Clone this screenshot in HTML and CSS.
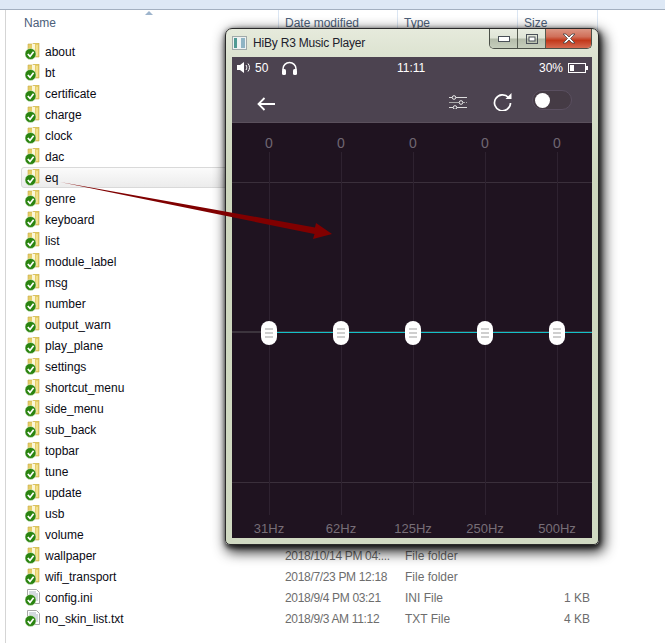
FILE: index.html
```html
<!DOCTYPE html>
<html>

<head>
    <meta charset="UTF-8">
    <title>HiBy R3 Music Player</title>
    <link rel="stylesheet" href="styles.css">
</head>

<body>

    <svg class="defs" width="0" height="0">
        <symbol id="folder" viewBox="0 0 15 17">
            <path d="M3 1h5l1-1h5v14H3z" fill="#e6cd68" stroke="#c8ab48" stroke-width=".6"/>
            <path d="M7 1h3v12H7z" fill="#fbf6d8"/>
            <path d="M11 2h2v11h-2z" fill="#f2e08c"/>
            <circle cx="5.500" cy="11" r="5.500" fill="#2a8410" stroke="#e8f4e0" stroke-width=".5"/>
            <path d="M2.800 11l2.200 2.400 3.600-4.600" fill="none" stroke="#fff" stroke-width="1.700"/>
        </symbol>
        <symbol id="file" viewBox="0 0 15 17">
            <path d="M2.500 .5h9l3 3v11h-12z" fill="#fff" stroke="#a8a8a8"/>
            <path d="M4 3h7M4 5h9M4 7h9M8 9h5M9 11h4" stroke="#a9b4c0"/>
            <circle cx="5.500" cy="11" r="5.500" fill="#2a8410" stroke="#e8f4e0" stroke-width=".5"/>
            <path d="M2.800 11l2.200 2.400 3.600-4.600" fill="none" stroke="#fff" stroke-width="1.700"/>
        </symbol>
    </svg>

    <div class="explorer">
        <div class="toolbar"></div>
        <div class="head">
            <div class="hcell hname">Name</div>
            <div class="hcell hdate">Date modified</div>
            <div class="hcell htype">Type</div>
            <div class="hcell hsize">Size</div>
        </div>

        <div class="list">
            <div class="row"><span class="name"><svg class="ico"><use href="#folder"/></svg>about</span></div>
            <div class="row"><span class="name"><svg class="ico"><use href="#folder"/></svg>bt</span></div>
            <div class="row"><span class="name"><svg class="ico"><use href="#folder"/></svg>certificate</span></div>
            <div class="row"><span class="name"><svg class="ico"><use href="#folder"/></svg>charge</span></div>
            <div class="row"><span class="name"><svg class="ico"><use href="#folder"/></svg>clock</span></div>
            <div class="row"><span class="name"><svg class="ico"><use href="#folder"/></svg>dac</span></div>
            <div class="row hover"><span class="name"><svg class="ico"><use href="#folder"/></svg>eq</span></div>
            <div class="row"><span class="name"><svg class="ico"><use href="#folder"/></svg>genre</span></div>
            <div class="row"><span class="name"><svg class="ico"><use href="#folder"/></svg>keyboard</span></div>
            <div class="row"><span class="name"><svg class="ico"><use href="#folder"/></svg>list</span></div>
            <div class="row"><span class="name"><svg class="ico"><use href="#folder"/></svg>module_label</span></div>
            <div class="row"><span class="name"><svg class="ico"><use href="#folder"/></svg>msg</span></div>
            <div class="row"><span class="name"><svg class="ico"><use href="#folder"/></svg>number</span></div>
            <div class="row"><span class="name"><svg class="ico"><use href="#folder"/></svg>output_warn</span></div>
            <div class="row"><span class="name"><svg class="ico"><use href="#folder"/></svg>play_plane</span></div>
            <div class="row"><span class="name"><svg class="ico"><use href="#folder"/></svg>settings</span></div>
            <div class="row"><span class="name"><svg class="ico"><use href="#folder"/></svg>shortcut_menu</span></div>
            <div class="row"><span class="name"><svg class="ico"><use href="#folder"/></svg>side_menu</span></div>
            <div class="row"><span class="name"><svg class="ico"><use href="#folder"/></svg>sub_back</span></div>
            <div class="row"><span class="name"><svg class="ico"><use href="#folder"/></svg>topbar</span></div>
            <div class="row"><span class="name"><svg class="ico"><use href="#folder"/></svg>tune</span></div>
            <div class="row"><span class="name"><svg class="ico"><use href="#folder"/></svg>update</span></div>
            <div class="row"><span class="name"><svg class="ico"><use href="#folder"/></svg>usb</span></div>
            <div class="row"><span class="name"><svg class="ico"><use href="#folder"/></svg>volume</span></div>
            <div class="row"><span class="name"><svg class="ico"><use href="#folder"/></svg>wallpaper</span><span class="cell date">2018/10/14 PM 04:...</span><span class="cell">File folder</span></div>
            <div class="row"><span class="name"><svg class="ico"><use href="#folder"/></svg>wifi_transport</span><span class="cell date">2018/7/23 PM 12:18</span><span class="cell">File folder</span></div>
            <div class="row"><span class="name"><svg class="ico"><use href="#file"/></svg>config.ini</span><span class="cell date">2018/9/4 PM 03:21</span><span class="cell">INI File</span><span class="cell size">1 KB</span></div>
            <div class="row"><span class="name"><svg class="ico"><use href="#file"/></svg>no_skin_list.txt</span><span class="cell date">2018/9/3 AM 11:12</span><span class="cell">TXT File</span><span class="cell size">4 KB</span></div>
        </div>
    </div>

    <div class="window">
        <div class="titlebar">
            <svg class="appicon" width="15" height="14" viewBox="0 0 15 14">
                <rect x=".5" y=".5" width="14" height="13" fill="#eef2f2" stroke="#a0aaaa"/>
                <rect x="2" y="2" width="3" height="10" fill="#4f9a94"/>
                <rect x="9" y="2" width="4" height="10" fill="#8fb4c4"/>
            </svg>
            <span class="wintitle">HiBy R3 Music Player</span>
            <div class="controls">
                <div class="ctl">
                    <svg width="12" height="6" viewBox="0 0 12 6"><rect x=".5" y=".5" width="11" height="5" fill="#fff" stroke="#4a5058"/></svg>
                </div>
                <div class="ctl">
                    <svg width="12" height="10" viewBox="0 0 12 10"><rect x=".5" y=".5" width="11" height="9" fill="none" stroke="#4a5058"/><rect x="3" y="3" width="6" height="4" fill="#fff" stroke="#4a5058"/></svg>
                </div>
                <div class="ctl close">
                    <svg width="16" height="11" viewBox="0 0 16 11"><path d="M2 1h3l3 3 3-3h3l-4.500 4.500L14 10h-3L8 7l-3 3H2l4.500-4.500z" fill="#fff" stroke="#444" stroke-width=".8"/></svg>
                </div>
            </div>
        </div>

        <div class="client">
            <div class="status">
                <svg class="speaker" width="14" height="11" viewBox="0 0 14 11">
                    <path d="M0 3h3l4-3v11L3 8H0z" fill="#fff"/>
                    <path d="M9 3c1 1.500 1 3.500 0 5M11 1.500c2 2.500 2 5.500 0 8" fill="none" stroke="#fff"/>
                </svg>
                <span class="vol">50</span>
                <svg class="phones" width="17" height="14" viewBox="0 0 17 14">
                    <path d="M2 9V8a6.500 6.500 0 0 1 13 0v1" fill="none" stroke="#fff" stroke-width="1.500"/>
                    <rect x="1" y="8" width="4" height="6" rx="1.500" fill="#fff"/>
                    <rect x="12" y="8" width="4" height="6" rx="1.500" fill="#fff"/>
                </svg>
                <span class="clock">11:11</span>
                <span class="batt">30%</span>
                <svg width="20" height="10" viewBox="0 0 20 10">
                    <rect x=".5" y=".5" width="17" height="9" fill="none" stroke="#fff"/>
                    <rect x="2" y="2" width="4" height="6" fill="#fff"/>
                    <rect x="18" y="3" width="2" height="4" fill="#fff"/>
                </svg>
            </div>

            <div class="nav">
                <svg class="back" width="18" height="14" viewBox="0 0 18 14">
                    <path d="M18 7H1.500M7.500 1L1.500 7l6 6" fill="none" stroke="#fff" stroke-width="1.800"/>
                </svg>
                <svg class="tune" width="18" height="14" viewBox="0 0 18 14">
                    <path d="M0 2.500h18M0 12.500h18" stroke="#ddd"/>
                    <path d="M0 7.500h10M14 7.500h2M17 7.500h1" stroke="#aaa"/>
                    <circle cx="5" cy="2.500" r="1.800" fill="#4c4350" stroke="#eee"/>
                    <circle cx="12" cy="7.500" r="1.800" fill="#4c4350" stroke="#eee"/>
                    <circle cx="6" cy="12.500" r="1.800" fill="#4c4350" stroke="#eee"/>
                </svg>
                <svg class="refresh" width="19" height="18" viewBox="0 0 19 18">
                    <path d="M15.500 4.500A8 8 0 1 0 17.500 10" fill="none" stroke="#fff" stroke-width="1.700"/>
                    <path d="M12.500 6h6V0z" fill="#fff"/>
                </svg>
                <div class="toggle"><div class="dot"></div></div>
            </div>

            <div class="eq">
                <div class="hline top"></div>
                <div class="hline mid"></div>
                <div class="hline bot"></div>
                <div class="teal"></div>
                <div class="band"><span class="val">0</span><div class="track"><div class="knob"><i></i><i></i><i></i></div></div><span class="hz">31Hz</span></div>
                <div class="band"><span class="val">0</span><div class="track"><div class="knob"><i></i><i></i><i></i></div></div><span class="hz">62Hz</span></div>
                <div class="band"><span class="val">0</span><div class="track"><div class="knob"><i></i><i></i><i></i></div></div><span class="hz">125Hz</span></div>
                <div class="band"><span class="val">0</span><div class="track"><div class="knob"><i></i><i></i><i></i></div></div><span class="hz">250Hz</span></div>
                <div class="band"><span class="val">0</span><div class="track"><div class="knob"><i></i><i></i><i></i></div></div><span class="hz">500Hz</span></div>
            </div>
        </div>
    </div>

    <svg class="arrow" width="665" height="643" viewBox="0 0 665 643">
        <path d="M60 182L315 227.500 316 223 332 234 313 239 314.500 234z" fill="#800000"/>
    </svg>

</body>

</html>
```

FILE: styles.css
```css
body {
    margin: 0;
    width: 665px;
    height: 643px;
    position: relative;
    overflow: hidden;
    background: #fff;
    font-family: "Liberation Sans", sans-serif;
    font-size: 12px;
}

.defs {
    position: absolute;
}

/* explorer behind the window */

.explorer {
    height: 643px;
    margin-left: 5px;
    border-left: 1px solid #d5d5d5;
}

.toolbar {
    height: 9px;
    margin-left: -6px;
    background: #dde8f5;
    border-bottom: 1px solid #a3b0c0;
}

.head {
    display: flex;
    height: 31px;
    color: #4c607a;
}

.hcell {
    height: 26px;
    padding-top: 6px;
    box-sizing: border-box;
    border-right: 1px solid #dbe6f3;
}

.hname {
    width: 273px;
    padding-left: 18px;
    position: relative;
}

.hname::after {
    content: "";
    position: absolute;
    left: 139px;
    top: 1px;
    border: 4px solid transparent;
    border-top: 0;
    border-bottom-color: #9db4cc;
}

.hdate {
    width: 119px;
    padding-left: 6px;
}

.htype {
    width: 120px;
    padding-left: 6px;
}

.hsize {
    width: 80px;
    padding-left: 6px;
}

.list {
    margin-left: 15px;
}

.row {
    display: grid;
    grid-template-columns: 260px 120px 1fr auto;
    align-items: center;
    height: 21px;
    box-sizing: border-box;
    padding: 0 74px 0 3px;
    border: 1px solid transparent;
    color: #6d6d6d;
}

.row.hover {
    margin-right: 100px;
    border-color: #d9d9d9;
    border-radius: 3px;
    background: linear-gradient(#fbfbfb, #ececec);
}

.name {
    display: flex;
    align-items: center;
    color: #0a0a14;
}

.ico {
    width: 15px;
    height: 17px;
    margin-right: 5px;
    flex: none;
}

.date {
    letter-spacing: -.33px;
}

.cell.size {
    text-align: right;
}

/* player window */

.window {
    position: absolute;
    left: 225px;
    top: 28px;
    width: 374px;
    height: 517px;
    box-sizing: border-box;
    padding: 0 6px 6px;
    display: flex;
    flex-direction: column;
    border: 1px solid #2a2a2a;
    border-radius: 7px 7px 5px 5px;
    background: linear-gradient(#e6eadc, #dbe2cf 6%, #cdd6bd 30%, #d0d9c2 100%);
    box-shadow: 1px 2px 4px 1px rgba(0, 0, 0, .6), 3px 5px 13px 2px rgba(0, 0, 0, .85);
}

.titlebar {
    display: flex;
    height: 28px;
    flex: none;
    align-items: center;
}

.wintitle {
    margin-left: 6px;
    letter-spacing: -.2px;
    color: #20202c;
}

.controls {
    display: flex;
    align-self: flex-start;
    margin-left: auto;
    height: 19px;
    border: 1px solid #4b5048;
    border-top: 0;
    border-radius: 0 0 5px 5px;
    overflow: hidden;
}

.ctl {
    width: 27px;
    display: flex;
    align-items: center;
    justify-content: center;
    border-right: 1px solid #555b50;
    background: linear-gradient(#e8ece0 0%, #dfe4d6 48%, #b4bcaa 52%, #c6cebc 100%);
}

.ctl.close {
    width: 45px;
    border-right: 0;
    background: linear-gradient(#dc9582 0%, #d0705a 40%, #c2381a 60%, #d66a50 100%);
}

.client {
    flex: 1;
    display: flex;
    flex-direction: column;
    background: #1f1320;
    color: #fff;
}

.status {
    display: flex;
    align-items: center;
    height: 21px;
    padding: 0 4px 0 5px;
    background: #4c4350;
    position: relative;
}

.vol {
    margin-left: 4px;
}

.phones {
    margin-left: 13px;
}

.clock {
    position: absolute;
    left: 165px;
}

.batt {
    margin-left: auto;
    margin-right: 5px;
}

.nav {
    display: flex;
    align-items: center;
    height: 44px;
    padding-left: 25px;
    background: #4c4350;
}

.back {
    margin-top: 7px;
}

.tune {
    margin: 4px 0 0 174px;
}

.refresh {
    margin: 4px 0 0 26px;
}

.toggle {
    width: 40px;
    height: 20px;
    margin-left: 20px;
    box-sizing: border-box;
    padding: 2px 0 0 2px;
    border: 1px solid #5a4f60;
    border-radius: 10px;
    background: #453b45;
}

.dot {
    width: 15px;
    height: 15px;
    border-radius: 50%;
    background: #fff;
}

.eq {
    flex: 1;
    display: grid;
    grid-template-columns: repeat(5, 72px);
    position: relative;
    border-top: 1px solid #5a505c;
    box-sizing: border-box;
}

.hline {
    position: absolute;
    left: 0;
    right: 0;
    height: 1px;
    background: #3a2f3b;
}

.hline.top { top: 59px; }
.hline.mid { top: 208px; height: 2px; background: #3c343d; }
.hline.bot { top: 359px; }

.teal {
    position: absolute;
    left: 36px;
    right: 0;
    top: 209px;
    height: 1px;
    background: #14c0c8;
}

.band {
    display: flex;
    flex-direction: column;
    align-items: center;
    padding-left: 2px;
    position: relative;
}

.val {
    margin-top: 12px;
    height: 16px;
    line-height: 16px;
    font-size: 14px;
    color: #6f6672;
}

.track {
    flex: 1;
    width: 1px;
    margin-top: 1px;
    display: flex;
    align-items: center;
    justify-content: center;
    background: #2e2230;
}

.knob {
    flex: none;
    width: 16px;
    height: 24px;
    margin-top: -1px;
    box-sizing: border-box;
    display: flex;
    flex-direction: column;
    gap: 2px;
    align-items: center;
    justify-content: center;
    border-radius: 8px;
    background: #fff;
    position: relative;
}

.knob i {
    width: 8px;
    height: 2px;
    background: #cfcfcf;
}

.hz {
    height: 16px;
    line-height: 16px;
    margin: 6px 0 1px;
    font-size: 13px;
    color: #776e77;
}

.arrow {
    position: absolute;
    left: 0;
    top: 0;
    pointer-events: none;
}
```
